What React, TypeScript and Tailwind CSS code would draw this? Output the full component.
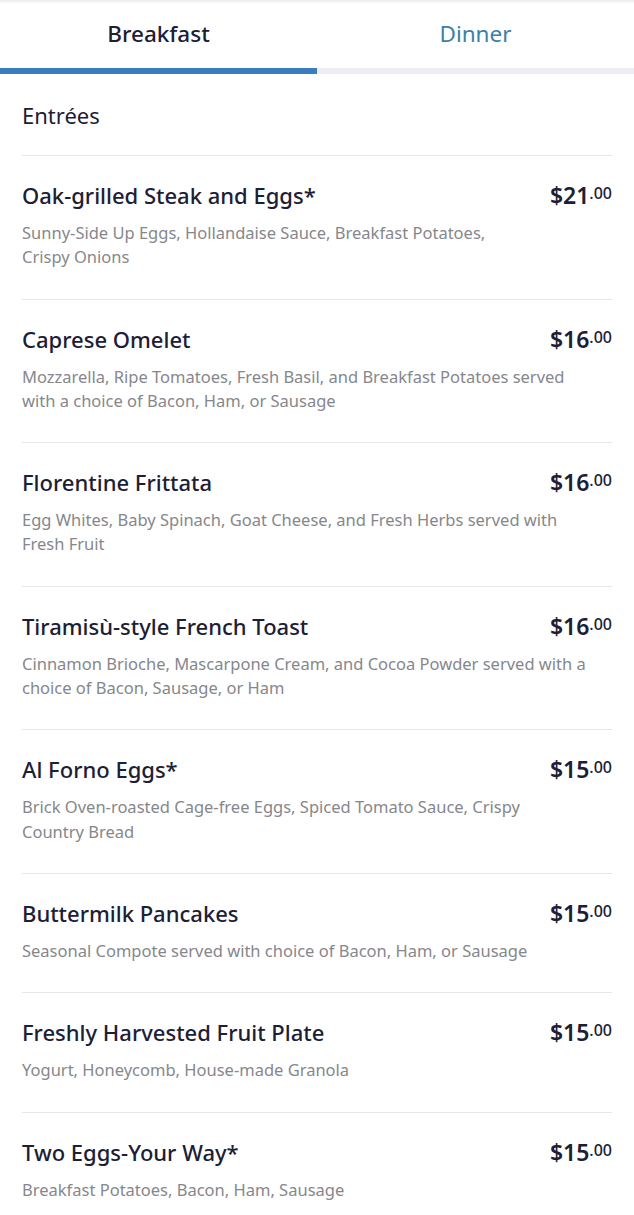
import { useState } from "react";

const items = [
  {
    name: "Oak-grilled Steak and Eggs*",
    price: "21",
    desc: ["Sunny-Side Up Eggs, Hollandaise Sauce, Breakfast Potatoes,", "Crispy Onions"],
  },
  {
    name: "Caprese Omelet",
    price: "16",
    desc: [
      "Mozzarella, Ripe Tomatoes, Fresh Basil, and Breakfast Potatoes served",
      "with a choice of Bacon, Ham, or Sausage",
    ],
  },
  {
    name: "Florentine Frittata",
    price: "16",
    desc: ["Egg Whites, Baby Spinach, Goat Cheese, and Fresh Herbs served with", "Fresh Fruit"],
  },
  {
    name: "Tiramisù-style French Toast",
    price: "16",
    desc: [
      "Cinnamon Brioche, Mascarpone Cream, and Cocoa Powder served with a",
      "choice of Bacon, Sausage, or Ham",
    ],
  },
  {
    name: "Al Forno Eggs*",
    price: "15",
    desc: ["Brick Oven-roasted Cage-free Eggs, Spiced Tomato Sauce, Crispy", "Country Bread"],
  },
  {
    name: "Buttermilk Pancakes",
    price: "15",
    desc: ["Seasonal Compote served with choice of Bacon, Ham, or Sausage"],
  },
  {
    name: "Freshly Harvested Fruit Plate",
    price: "15",
    desc: ["Yogurt, Honeycomb, House-made Granola"],
  },
  {
    name: "Two Eggs-Your Way*",
    price: "15",
    desc: ["Breakfast Potatoes, Bacon, Ham, Sausage"],
  },
];

function MenuItem({ name, price, desc }: { name: string; price: string; desc: string[] }) {
  return (
    <div className="border-t border-[#e6e7ea] pt-[25px] pb-[29px]">
      <div className="flex justify-between items-start">
        <div className="text-[22px] leading-[28px] font-medium text-[#1c2035]">{name}</div>
        <div className="flex items-start text-[#1c2035]">
          <span className="text-[23px] leading-[28px] font-semibold">${price}</span>
          <span className="mt-[4px] text-[16px] leading-none font-medium">.00</span>
        </div>
      </div>
      <div className="mt-[12px] text-[16.5px] leading-[24.3px] text-[#86878c]">
        {desc.map((line, idx) => (
          <div key={idx} className="whitespace-nowrap">
            {line}
          </div>
        ))}
      </div>
    </div>
  );
}

export default function App() {
  const [tab, setTab] = useState("breakfast");

  return (
    <div className="w-[634px] h-[1215px] overflow-hidden bg-white font-['Noto_Sans',sans-serif]">
      <div className="h-[4px] bg-gradient-to-b from-[#ececec] to-white"></div>
      <div className="flex">
        <button
          onClick={() => setTab("breakfast")}
          className="flex-1 flex flex-col items-center"
        >
          <span className="h-[64px] pb-[4px] flex items-center text-[22.5px] font-medium text-[#1c2035]">
            Breakfast
          </span>
          <span className="h-[6px] w-full bg-[#3a7dbf]"></span>
        </button>
        <button
          onClick={() => setTab("dinner")}
          className="flex-1 flex flex-col items-center"
        >
          <span className="h-[64px] pb-[4px] flex items-center text-[22.5px] text-[#3b80a8]">
            Dinner
          </span>
          <span className="h-[6px] w-full bg-[#eceef1]"></span>
        </button>
      </div>
      <div className="px-[22px]">
        <div className="h-[81px] pt-[26px] text-[22px] leading-[30px] text-[#1c2035]">Entrées</div>
        {items.map((item, idx) => (
          <MenuItem key={idx} name={item.name} price={item.price} desc={item.desc} />
        ))}
      </div>
    </div>
  );
}
